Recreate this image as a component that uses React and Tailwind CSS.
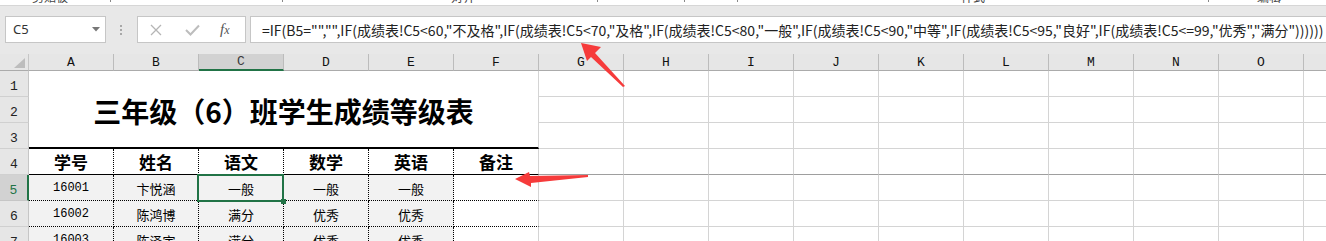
import React from "react";

const COLS = ["A", "B", "C", "D", "E", "F", "G", "H", "I", "J", "K", "L", "M", "N", "O"];
const FREE = ["G", "H", "I", "J", "K", "L", "M", "N", "O"];

const FORMULA =
  '=IF(B5="","",IF(成绩表!C5<60,"不及格",IF(成绩表!C5<70,"及格",IF(成绩表!C5<80,"一般",IF(成绩表!C5<90,"中等",IF(成绩表!C5<95,"良好",IF(成绩表!C5<=99,"优秀","满分"))))))';

const DATA = [
  ["16001", "卞悦涵", "一般", "一般", "一般"],
  ["16002", "陈鸿博", "满分", "优秀", "优秀"],
  ["16003", "陈泽宇", "满分", "优秀", "优秀"],
];

const mono = { fontFamily: "'Liberation Mono', 'DejaVu Sans Mono', monospace" };
const cjk = { fontFamily: "'Noto Sans CJK SC', 'Noto Sans', sans-serif" };

function RowHead({ n, selected }) {
  return (
    <div
      style={mono}
      className={
        selected
          ? "flex items-end justify-center pb-[3px] text-[13px] leading-none bg-[#d2d2d2] text-[#217346] border-r-2 border-b border-r-[#217346] border-b-[#c6c6c6]"
          : "flex items-end justify-center pb-[3px] text-[13px] leading-none bg-[#e6e6e6] text-[#222] border-r border-b border-r-[#c6c6c6] border-b-[#d0d0d0]"
      }
    >
      {n}
    </div>
  );
}

function FreeCells({ freeze }) {
  return (
    <>
      {FREE.map((c) => (
        <div
          key={c}
          className={
            freeze
              ? "border-r border-b border-r-[#d4d4d4] border-b-[#9e9e9e]"
              : "border-r border-b border-[#d4d4d4]"
          }
        />
      ))}
      <div
        className={freeze ? "border-b border-b-[#9e9e9e]" : "border-b border-[#d4d4d4]"}
      />
    </>
  );
}

function Sheet() {
  return (
    <div className="grid grid-cols-[29px_repeat(15,85px)_1fr] grid-rows-[17px_repeat(7,26px)] bg-white">
      {/* column headers */}
      <div className="flex items-end justify-end bg-[#e6e6e6] border-r border-b border-r-[#c6c6c6] border-b-[#ababab] pr-[3px] pb-[2px]">
        <svg width="11" height="10" viewBox="0 0 11 10">
          <polygon points="11,0 11,10 0,10" fill="#bdbdbd" />
        </svg>
      </div>
      {COLS.map((c) => (
        <div
          key={c}
          style={mono}
          className={
            c === "C"
              ? "flex items-center justify-center text-[13px] leading-none bg-[#d2d2d2] text-[#3a3a3a] border-r border-b-2 border-r-[#bcbcbc] border-b-[#217346]"
              : "flex items-center justify-center text-[13px] leading-none bg-[#e6e6e6] text-[#111] border-r border-b border-r-[#bcbcbc] border-b-[#ababab]"
          }
        >
          {c}
        </div>
      ))}
      <div className="bg-[#e6e6e6] border-b border-b-[#ababab]" />

      {/* rows 1-3 */}
      <RowHead n={1} />
      <div
        style={cjk}
        className="col-span-6 row-span-3 flex items-center justify-center pt-[3px] bg-white border-r border-b-2 border-r-[#d4d4d4] border-b-black text-[28px] font-bold text-black leading-none"
      >
        三年级（6）班学生成绩等级表
      </div>
      <FreeCells />
      <RowHead n={2} />
      <FreeCells />
      <RowHead n={3} />
      <FreeCells />

      {/* row 4 */}
      <RowHead n={4} />
      {["学号", "姓名", "语文", "数学", "英语"].map((t) => (
        <div
          key={t}
          style={cjk}
          className="flex items-center justify-center text-[17px] font-bold leading-none text-black border-r border-b border-black [border-right-style:dotted]"
        >
          {t}
        </div>
      ))}
      <div
        style={cjk}
        className="flex items-center justify-center text-[17px] font-bold leading-none text-black border-r border-b border-r-[#d4d4d4] border-b-black"
      >
        备注
      </div>
      <FreeCells freeze />

      {/* data rows */}
      {DATA.map((row, i) => (
        <React.Fragment key={row[0]}>
          <RowHead n={5 + i} selected={i === 0} />
          {row.map((v, j) => (
            <div
              key={j}
              className="relative flex items-center justify-center pt-[1px] bg-[#f2f2f2] text-black border-r border-b border-black border-dotted"
            >
              {j === 0 ? (
                <span style={mono} className="text-[12px] leading-none">
                  {v}
                </span>
              ) : (
                <span style={cjk} className="text-[13px] leading-none">
                  {v}
                </span>
              )}
              {i === 0 && j === 2 ? (
                <div className="absolute z-10 -left-[2px] -top-[1px] w-[87px] h-[28px] border-2 border-[#217346]">
                  <div className="absolute -right-[4px] -bottom-[4px] w-[5px] h-[5px] bg-[#217346]" />
                </div>
              ) : null}
            </div>
          ))}
          <div className="bg-white border-r border-b border-r-[#d4d4d4] border-b-black [border-bottom-style:dotted]" />
          <FreeCells />
        </React.Fragment>
      ))}
    </div>
  );
}

function RibbonStrip() {
  return (
    <div
      style={cjk}
      className="h-[5px] overflow-hidden bg-white flex items-start text-[12px] leading-[12px] text-[#444]"
    >
      <span className="ml-[32px] -mt-[9px]">剪贴板</span>
      <span className="ml-[38px] -mt-[7px] w-[5px] h-[9px] border-r border-[#888]" />
      <span className="ml-[167px] -mt-[7px] w-[5px] h-[9px] border-r border-[#888]" />
      <span className="ml-[168px] -mt-[9px]">对齐</span>
      <span className="ml-[118px] -mt-[7px] w-[5px] h-[9px] border-r border-[#888]" />
      <span className="ml-[82px] -mt-[7px] w-[5px] h-[9px] border-r border-[#888]" />
      <span className="ml-[48px] -mt-[7px] w-[5px] h-[9px] border-r border-[#888]" />
      <span className="ml-[223px] -mt-[9px]">样式</span>
      <span className="ml-[219px] -mt-[7px] w-[5px] h-[9px] border-r border-[#888]" />
      <span className="ml-[48px] -mt-[9px]">编辑</span>
    </div>
  );
}

function FormulaArea() {
  return (
    <div className="h-[49px] bg-[#e8e8e8] border-t border-[#d6d6d6] flex items-start pt-[10px] pl-[5px]">
      <div className="w-[101px] h-[27px] bg-white border border-[#c6c6c6] flex items-center justify-between pl-[7px] pr-[5px]">
        <span style={{ fontFamily: "'Noto Sans', 'Open Sans', sans-serif" }} className="text-[13px] text-[#333] leading-none">
          C5
        </span>
        <svg width="8" height="5" viewBox="0 0 8 5">
          <polygon points="0,0 8,0 4,4.5" fill="#777" />
        </svg>
      </div>
      <div className="ml-[14px] mt-[9px] w-[3px] flex flex-col gap-[2px]">
        <div className="w-[2px] h-[2px] bg-[#a8a8a8]" />
        <div className="w-[2px] h-[2px] bg-[#a8a8a8]" />
        <div className="w-[2px] h-[2px] bg-[#a8a8a8]" />
      </div>
      <div className="ml-[14px] w-[109px] h-[27px] bg-white border border-[#c6c6c6] flex items-center">
        <svg className="ml-[12px]" width="12" height="12" viewBox="0 0 12 12">
          <path d="M1 1 L11 11 M11 1 L1 11" stroke="#b5b5b5" strokeWidth="1.3" fill="none" />
        </svg>
        <svg className="ml-[23px]" width="15" height="12" viewBox="0 0 15 12">
          <path d="M1 6 L5.5 10.5 L14 1.5" stroke="#bdbdbd" strokeWidth="2" fill="none" />
        </svg>
        <span
          style={{ fontFamily: "'Liberation Serif', 'DejaVu Serif', serif" }}
          className="ml-[20px] text-[15px] italic text-[#555] leading-none"
        >
          f<span className="text-[12px]">x</span>
        </span>
      </div>
      <div className="ml-[4px] flex-1 h-[27px] bg-white border border-r-0 border-[#c6c6c6] flex items-center pl-[11px] overflow-hidden">
        <span style={cjk} className="text-[14px] text-[#222] leading-none whitespace-nowrap">
          {FORMULA}
        </span>
      </div>
    </div>
  );
}

export default function App() {
  return (
    <div className="relative w-[1326px] h-[241px] overflow-hidden bg-white">
      <RibbonStrip />
      <FormulaArea />
      <Sheet />
      <svg className="absolute inset-0 pointer-events-none" width="1326" height="241" viewBox="0 0 1326 241">
        <polygon
          points="581,43 601,47 595,53 625,86 623,87 591,57 587,61"
          fill="#f63b3b"
        />
        <polygon
          points="515,179 529,172 530,176 588,175 588,177 531,183 531,187"
          fill="#f63b3b"
        />
      </svg>
    </div>
  );
}
